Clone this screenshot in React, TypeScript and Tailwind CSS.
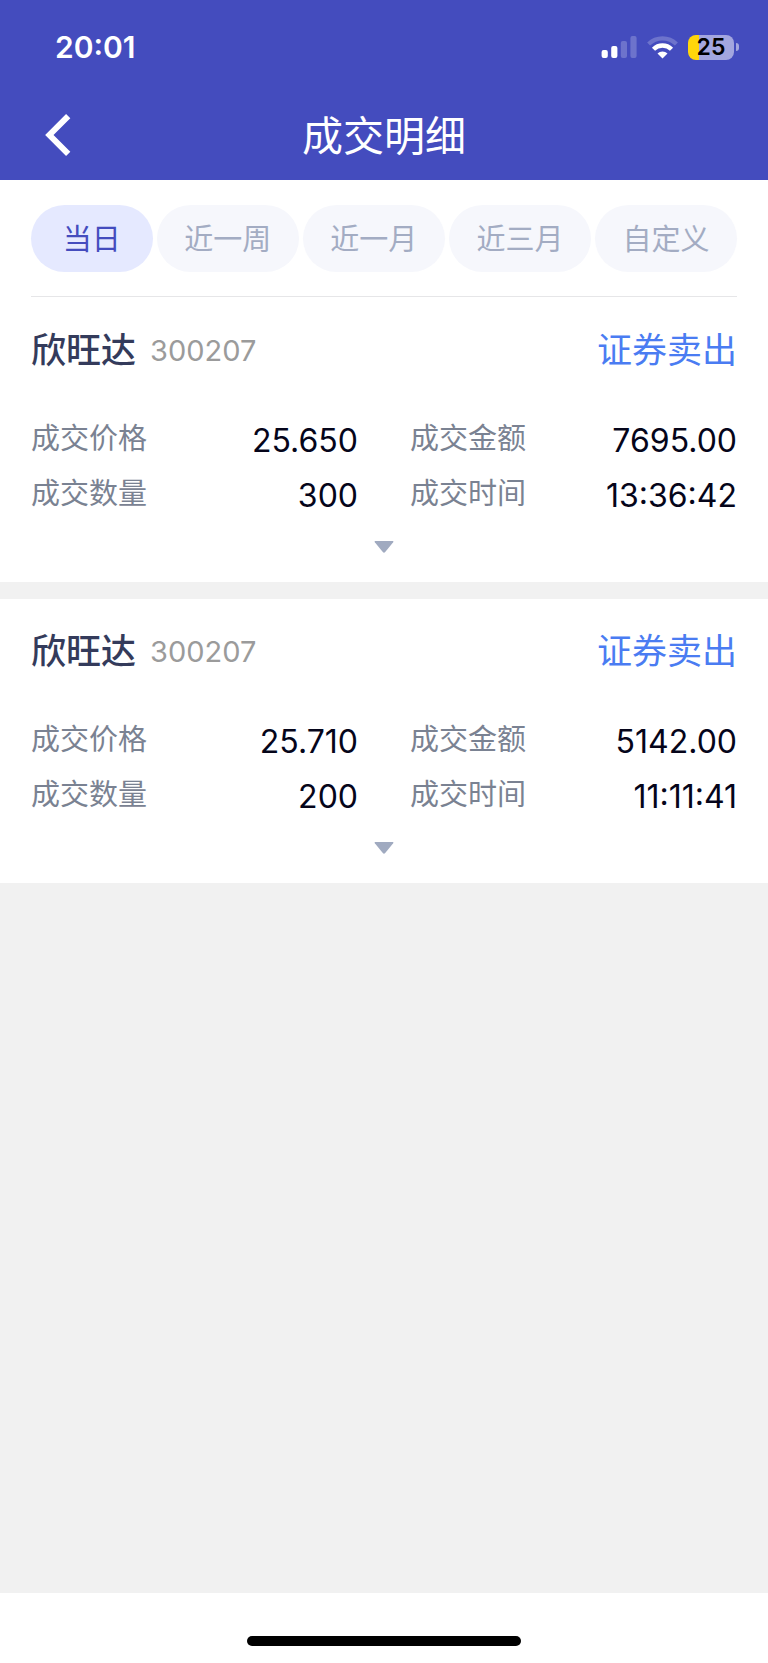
import React, { useState } from "react";

const tabs = ["当日", "近一周", "近一月", "近三月", "自定义"];

const trades = [
  {
    name: "欣旺达",
    code: "300207",
    side: "证券卖出",
    price: "25.650",
    amount: "7695.00",
    quantity: "300",
    time: "13:36:42",
  },
  {
    name: "欣旺达",
    code: "300207",
    side: "证券卖出",
    price: "25.710",
    amount: "5142.00",
    quantity: "200",
    time: "11:11:41",
  },
];

const StatusBar = () => {
  return (
    <div className="flex h-[94px] items-center justify-between pl-[55px] pr-[29px]">
      <span className="text-[30px] font-semibold leading-none">20:01</span>
      <div className="flex items-center gap-[10px]">
        <svg width="36" height="24" viewBox="0 0 36 24" fill="#fff">
          <rect x="0.6" y="15" width="6.2" height="8" rx="2" />
          <rect x="10.2" y="11" width="6.2" height="12" rx="2" />
          <rect x="19.8" y="6" width="6.2" height="17" rx="2" opacity="0.22" />
          <rect x="29.4" y="1" width="6.2" height="22" rx="2" opacity="0.22" />
        </svg>
        <svg width="31" height="24" viewBox="0 0 31 24" fill="none">
          <path
            d="M1.6 9.1a19.7 19.7 0 0 1 27.8 0"
            stroke="#fff"
            strokeOpacity="0.22"
            strokeWidth="4.2"
          />
          <path
            d="M6.5 14.3a12.7 12.7 0 0 1 18 0"
            stroke="#fff"
            strokeWidth="4.4"
          />
          <path
            d="M15.5 23.6l-5-5.1a7.1 7.1 0 0 1 10 0z"
            fill="#fff"
          />
        </svg>
        <div className="flex items-center gap-[2px]">
          <div className="flex h-[25px] w-[46px] items-center justify-center rounded-lg bg-linear-to-r from-[#ffd60a] from-25% to-[#a3a6df] to-25% text-[23px] font-semibold leading-none text-black">
            25
          </div>
          <div className="h-2 w-[3px] rounded-r-full bg-[#a3a6df]" />
        </div>
      </div>
    </div>
  );
};

const Field = ({ label, value }: { label: string; value: string }) => {
  return (
    <div className="flex h-[55px] items-center justify-between">
      <dt className="pb-1 text-[29px] leading-none text-[#7a8292]">{label}</dt>
      <dd className="text-[32px] leading-none text-[#05051a]">{value}</dd>
    </div>
  );
};

const TradeCard = ({ trade }: { trade: (typeof trades)[0] }) => {
  return (
    <article className="bg-white px-[31px] pt-[27px] pb-[11px]">
      <div className="flex h-[50px] items-center justify-between">
        <div className="flex items-center gap-[14px]">
          <h2 className="text-[35px] leading-none font-medium text-[#343b5b]">
            {trade.name}
          </h2>
          <span className="text-[29px] leading-none text-[#9b9b9b]">
            {trade.code}
          </span>
        </div>
        <span className="text-[35px] leading-none text-[#4a7cf2]">
          {trade.side}
        </span>
      </div>
      <dl className="mt-[38px] grid grid-cols-2 gap-x-[52px]">
        <Field label="成交价格" value={trade.price} />
        <Field label="成交金额" value={trade.amount} />
        <Field label="成交数量" value={trade.quantity} />
        <Field label="成交时间" value={trade.time} />
      </dl>
      <button
        type="button"
        aria-label="展开"
        className="flex h-12 w-full items-center justify-center"
      >
        <svg width="20" height="12" viewBox="0 0 20 12" fill="#a0aac0">
          <path d="M1.2 0h17.6q1 .4.4 1.3l-8 9.7q-1.2 1.3-2.4 0L.8 1.3Q.2.4 1.2 0z" />
        </svg>
      </button>
    </article>
  );
};

const App = () => {
  const [active, setActive] = useState("当日");

  return (
    <div className="flex min-h-screen flex-col bg-[#f1f1f1] font-['Inter','Noto_Sans_CJK_SC',sans-serif]">
      <header className="bg-[#444cbe] text-white">
        <StatusBar />
        <div className="grid h-[86px] grid-cols-[1fr_auto_1fr] items-center px-[45px] pb-1">
          <button type="button" aria-label="返回" className="w-7">
            <svg width="26" height="42" viewBox="0 0 26 42" fill="none">
              <path d="M23.2 2.2L4.4 21l18.8 18.8" stroke="#fff" strokeWidth="6" />
            </svg>
          </button>
          <h1 className="pt-[3px] text-[41px] leading-none">成交明细</h1>
        </div>
      </header>

      <nav className="bg-white px-[31px] pt-[25px] pb-px">
        <div className="grid grid-cols-[6fr_7fr_7fr_7fr_7fr] gap-1 border-b border-[#e6e6e8] pb-6">
          {tabs.map((tab) => (
            <button
              key={tab}
              type="button"
              onClick={() => setActive(tab)}
              className={`h-[67px] rounded-full pt-[2px] text-[29px] leading-none ${
                active === tab
                  ? "bg-[#e5e9ff] text-[#444cbe]"
                  : "bg-[#f6f7fc] text-[#a3acc3]"
              }`}
            >
              {tab}
            </button>
          ))}
        </div>
      </nav>

      <main className="flex flex-1 flex-col gap-[17px]">
        {trades.map((trade) => (
          <TradeCard key={trade.time} trade={trade} />
        ))}
      </main>

      <footer className="flex h-[70px] justify-center bg-white pt-[43px]">
        <div className="h-[10px] w-[274px] rounded-full bg-black" />
      </footer>
    </div>
  );
};

export default App;
